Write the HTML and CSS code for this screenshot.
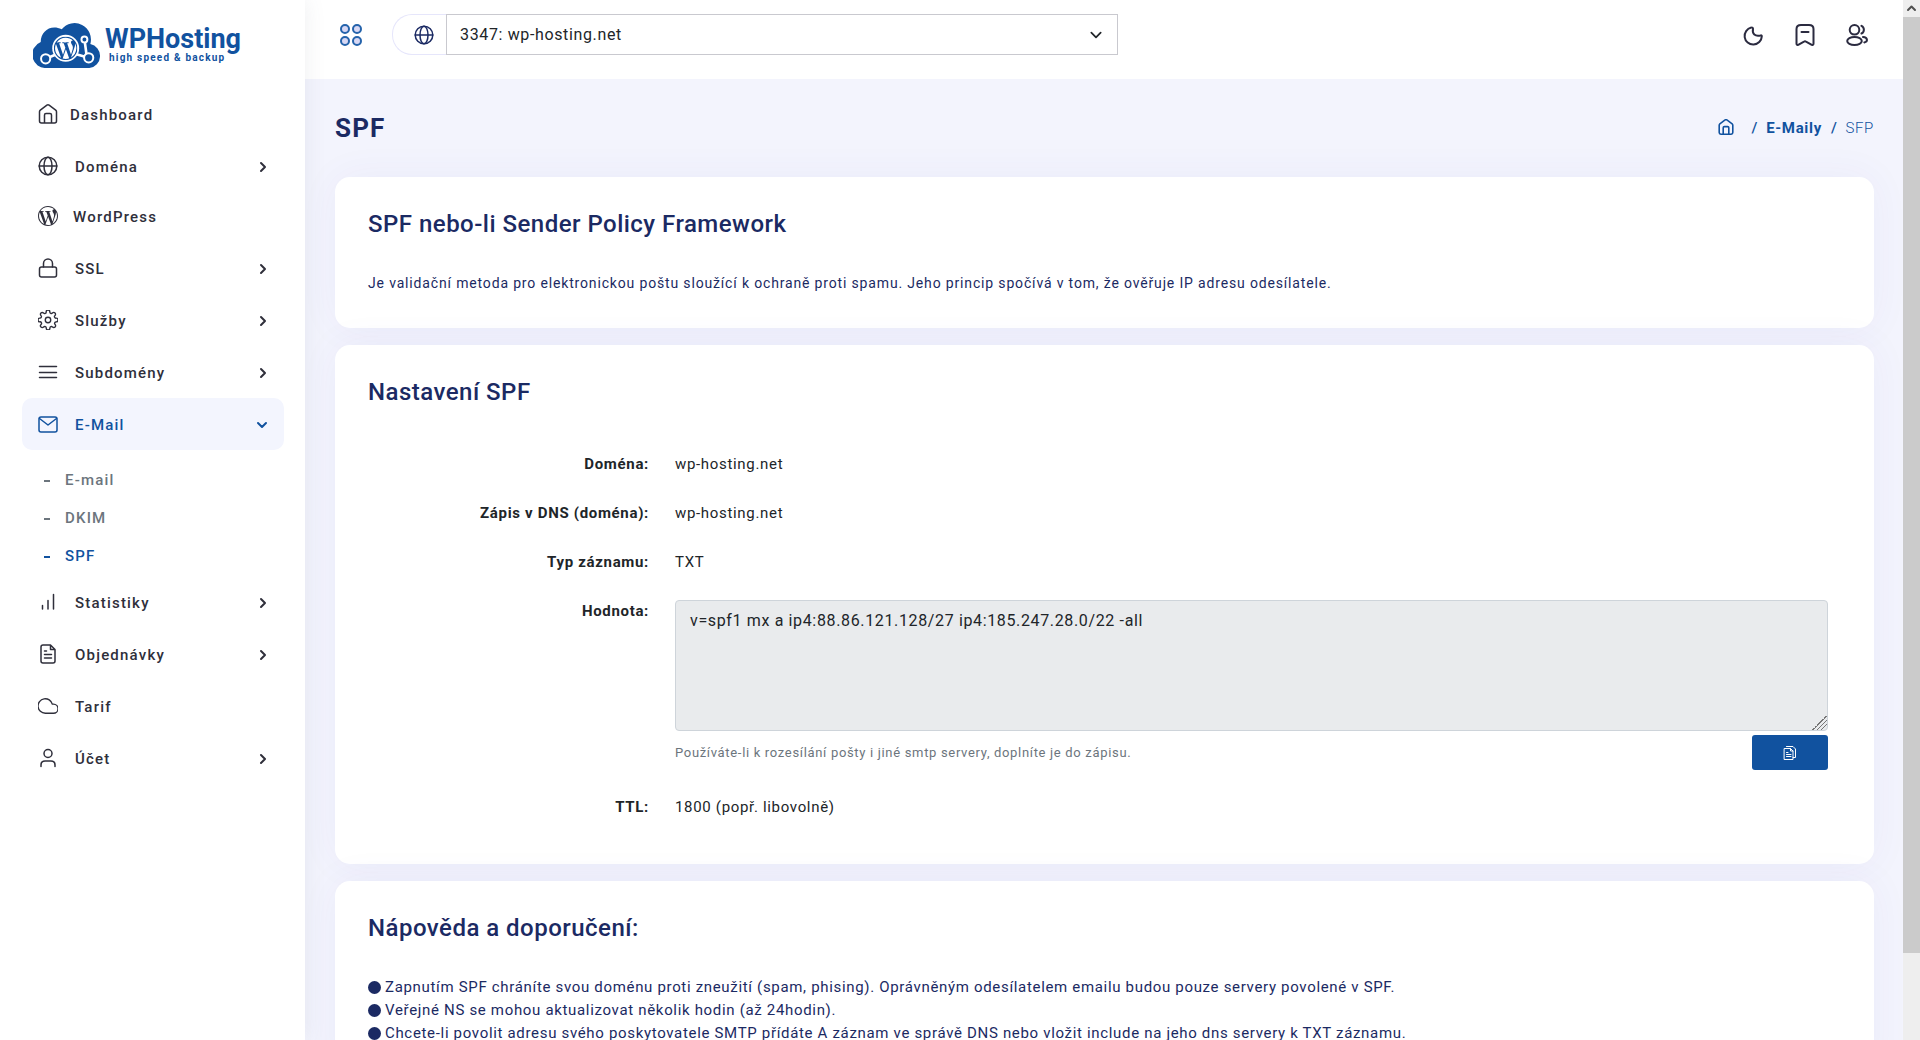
FILE: index.html
```html
<!DOCTYPE html>
<html lang="cs">
<head>
    <meta charset="utf-8">
    <title>SPF | WPHosting</title>
    <link rel="stylesheet" href="styles.css">
</head>
<body>
<svg class="sprite" aria-hidden="true">
    <symbol id="home" viewBox="0 0 20 20"><path d="M1.5 7.8 Q1.5 6.8 2.3 6.1 L8.9 1.2 Q10 .4 11.1 1.2 L17.7 6.1 Q18.5 6.8 18.5 7.8 V17 Q18.5 19 16.5 19 H3.5 Q1.5 19 1.5 17 Z M6.5 19 V11 Q6.5 9.5 8 9.5 H12 Q13.5 9.5 13.5 11 V19"/></symbol>
    <symbol id="globe" viewBox="0 0 20 20"><circle cx="10" cy="10" r="8.8"/><path d="M1.2 10 H18.8"/><ellipse cx="10" cy="10" rx="4" ry="8.8"/></symbol>
    <symbol id="wordpress" viewBox="0 0 24 24"><path d="M21.469 6.825c.84 1.537 1.318 3.3 1.318 5.175 0 3.979-2.156 7.456-5.363 9.325l3.295-9.527c.615-1.54.82-2.771.82-3.864 0-.405-.026-.78-.07-1.11m-7.981.105c.647-.03 1.232-.105 1.232-.105.582-.075.514-.93-.067-.899 0 0-1.755.135-2.88.135-1.064 0-2.85-.15-2.85-.15-.585-.03-.661.855-.075.885 0 0 .54.061 1.125.09l1.68 4.605-2.37 7.08L5.354 6.9c.649-.03 1.234-.1 1.234-.1.585-.075.516-.93-.065-.896 0 0-1.746.138-2.874.138-.2 0-.438-.008-.69-.015C4.911 3.15 8.235 1.215 12 1.215c2.809 0 5.365 1.072 7.286 2.833-.046-.003-.091-.009-.141-.009-1.06 0-1.812.923-1.812 1.914 0 .89.513 1.643 1.06 2.531.411.72.89 1.643.89 2.977 0 .915-.354 1.994-.821 3.479l-1.075 3.585-3.9-11.61.001.014zM12 22.784c-1.059 0-2.081-.153-3.048-.437l3.237-9.406 3.315 9.087c.024.053.05.101.078.149-1.12.393-2.325.609-3.582.609M1.211 12c0-1.564.336-3.05.935-4.39L7.29 21.709C3.694 19.96 1.212 16.271 1.211 12M12 0C5.385 0 0 5.385 0 12s5.385 12 12 12 12-5.385 12-12S18.615 0 12 0"/></symbol>
    <symbol id="lock" viewBox="0 0 20 20"><rect x="1.5" y="9" width="17" height="10" rx="2"/><path d="M5.5 9 V5.5 a4.5 4.5 0 0 1 9 0 V9"/></symbol>
    <symbol id="gear" viewBox="1 1 22 22"><circle cx="12" cy="12" r="3"/><path d="M19.4 15a1.65 1.65 0 0 0 .33 1.82l.06.06a2 2 0 1 1-2.83 2.83l-.06-.06a1.65 1.65 0 0 0-2.8 1.17V21a2 2 0 0 1-4 0v-.09A1.65 1.65 0 0 0 7.2 19.7l-.06.06a2 2 0 1 1-2.83-2.83l.06-.06A1.65 1.65 0 0 0 3.1 14H3a2 2 0 0 1 0-4h.09A1.65 1.65 0 0 0 4.3 7.2l-.06-.06a2 2 0 1 1 2.83-2.83l.06.06A1.65 1.65 0 0 0 10 3.1V3a2 2 0 0 1 4 0v.09a1.65 1.65 0 0 0 2.8 1.21l.06-.06a2 2 0 1 1 2.83 2.83l-.06.06A1.65 1.65 0 0 0 20.9 10H21a2 2 0 0 1 0 4h-.09a1.65 1.65 0 0 0-1.51 1z"/></symbol>
    <symbol id="lines" viewBox="0 0 20 20"><path d="M1.5 4.5 H18.5 M1.5 10.5 H18.5 M1.5 15.5 H18.5"/></symbol>
    <symbol id="mail" viewBox="0 0 20 20"><rect x="1" y="3" width="18" height="15" rx="2"/><path d="M1.5 4.5 L10 11 L18.5 4.5"/></symbol>
    <symbol id="bars" viewBox="0 0 20 20"><path d="M4.5 13.5 V17 M10 8.5 V17 M15.5 2.5 V17"/></symbol>
    <symbol id="file" viewBox="0 0 20 20"><path d="M12.5 1 H5 Q3 1 3 3 V17 Q3 19 5 19 H15 Q17 19 17 17 V5.5 Z V5.5 H17 M6.5 7 H8.5 M6.5 10.5 H13.5 M6.5 14 H13.5"/></symbol>
    <symbol id="cloud" viewBox="1 1 22 22"><path d="M18 10h-1.26A8 8 0 1 0 9 20h9a5 5 0 0 0 0-10z"/></symbol>
    <symbol id="user" viewBox="0 0 20 20"><circle cx="10" cy="5.5" r="4"/><path d="M3 18.5 V17 Q3 13 7 13 H13 Q17 13 17 17 V18.5"/></symbol>
    <symbol id="right" viewBox="0 0 10 12"><path d="M3 2 L7 6 L3 10"/></symbol>
    <symbol id="down" viewBox="0 0 12 10"><path d="M2 3 L6 7 L10 3"/></symbol>
</svg>

<aside class="sidebar">
    <a class="logo" href="#" aria-label="WPHosting">
        <svg class="logo-mark" viewBox="0 0 207 140">
            <path class="fill" d="M40 140 A41 41 0 0 1 22 61 C22 28 52 6 86 22 A50 50 0 0 1 173 67 A37 37 0 0 1 170 140 Z"/>
            <path class="wire" d="M37 112 L70 98 M168 109 L130 98 M155 53 L161 96"/>
            <circle class="white" cx="98" cy="80" r="41"/>
            <svg class="fill" x="62" y="44" width="72" height="72"><use href="#wordpress"/></svg>
            <circle class="node" cx="37" cy="112" r="14"/>
            <circle class="node" cx="168" cy="109" r="14"/>
            <circle class="node" cx="155" cy="53" r="9"/>
        </svg>
        <span class="logo-text">
            <span class="logo-name">WPHosting</span>
            <span class="logo-slogan">high speed &amp; backup</span>
        </span>
    </a>
    <nav class="menu">
        <a class="item dashboard" href="#"><svg class="icon"><use href="#home"/></svg><span>Dashboard</span></a>
        <a class="item" href="#"><svg class="icon"><use href="#globe"/></svg><span>Doména</span><svg class="arrow"><use href="#right"/></svg></a>
        <a class="item wordpress" href="#"><svg class="icon solid"><use href="#wordpress"/></svg><span>WordPress</span></a>
        <a class="item" href="#"><svg class="icon"><use href="#lock"/></svg><span>SSL</span><svg class="arrow"><use href="#right"/></svg></a>
        <a class="item" href="#"><svg class="icon"><use href="#gear"/></svg><span>Služby</span><svg class="arrow"><use href="#right"/></svg></a>
        <a class="item" href="#"><svg class="icon"><use href="#lines"/></svg><span>Subdomény</span><svg class="arrow"><use href="#right"/></svg></a>
        <a class="item active" href="#"><svg class="icon"><use href="#mail"/></svg><span>E-Mail</span><svg class="arrow"><use href="#down"/></svg></a>
        <div class="submenu">
            <a href="#">E-mail</a>
            <a href="#">DKIM</a>
            <a class="current" href="#">SPF</a>
        </div>
        <a class="item" href="#"><svg class="icon"><use href="#bars"/></svg><span>Statistiky</span><svg class="arrow"><use href="#right"/></svg></a>
        <a class="item" href="#"><svg class="icon"><use href="#file"/></svg><span>Objednávky</span><svg class="arrow"><use href="#right"/></svg></a>
        <a class="item" href="#"><svg class="icon"><use href="#cloud"/></svg><span>Tarif</span></a>
        <a class="item" href="#"><svg class="icon"><use href="#user"/></svg><span>Účet</span><svg class="arrow"><use href="#right"/></svg></a>
    </nav>
</aside>

<div class="page">
    <header class="header">
        <button class="toggle" aria-label="Menu">
            <svg viewBox="0 0 22 22"><circle cx="5" cy="5" r="4"/><circle cx="17" cy="5" r="4"/><circle cx="5" cy="17" r="4"/><circle cx="17" cy="17" r="4"/></svg>
        </button>
        <div class="domain">
            <label class="domain-label" for="domain" aria-label="Doména"><svg class="icon"><use href="#globe"/></svg></label>
            <div class="select">
                <select id="domain"><option>3347: wp-hosting.net</option></select>
                <svg><use href="#down"/></svg>
            </div>
        </div>
        <div class="tools">
            <button aria-label="Tmavý režim"><svg viewBox="0 0 22 22"><path d="M9.3 3.6 A8.6 8.6 0 1 0 19.8 12.4 Q20 11 18.5 11.4 C13 12.6 10 10 11 4.8 Q11 3.2 9.3 3.6 Z"/></svg></button>
            <button aria-label="Záložky"><svg viewBox="0 0 22 22"><path d="M2.5 5 Q2.5 1 7 1 H15 Q19.5 1 19.5 5 V19.5 Q19.5 21.5 17.8 20.8 L12 17.6 Q11 17 10 17.6 L4.2 20.8 Q2.5 21.5 2.5 19.5 Z M7.5 8 H14.5"/></svg></button>
            <button aria-label="Účet"><svg viewBox="0 0 22 22"><circle cx="8.5" cy="5.8" r="4.8"/><ellipse cx="8.5" cy="17" rx="7.3" ry="4"/><path d="M15.5 1.8 A4.3 4.3 0 0 1 15.5 9.5 M17 13 C22 13.4 22 17.6 18.3 18.4"/></svg></button>
        </div>
    </header>

    <main class="content">
        <div class="title-row">
            <h1>SPF</h1>
            <nav class="breadcrumb">
                <a href="#" aria-label="Dashboard"><svg class="icon"><use href="#home"/></svg></a>
                <span class="slash">/</span>
                <a href="#">E-Maily</a>
                <span class="slash">/</span>
                <span class="here">SFP</span>
            </nav>
        </div>

        <section class="card">
            <h2>SPF nebo-li Sender Policy Framework</h2>
            <p class="intro">Je validační metoda pro elektronickou poštu sloužící k ochraně proti spamu. Jeho princip spočívá v tom, že ověřuje IP adresu odesílatele.</p>
        </section>

        <section class="card">
            <h2>Nastavení SPF</h2>
            <div class="form">
                <b>Doména:</b><span>wp-hosting.net</span>
                <b>Zápis v DNS (doména):</b><span>wp-hosting.net</span>
                <b>Typ záznamu:</b><span>TXT</span>
                <label for="spf">Hodnota:</label>
                <div class="value">
                    <textarea id="spf" readonly>v=spf1 mx a ip4:88.86.121.128/27 ip4:185.247.28.0/22 -all</textarea>
                    <div class="under">
                        <small>Používáte-li k rozesílání pošty i jiné smtp servery, doplníte je do zápisu.</small>
                        <button class="copy" aria-label="Kopírovat"><svg viewBox="0 0 14 14"><path d="M1.5 2.5 H7.5 L10 5 V13.5 H1.5 Z M7.5 2.5 V5 H10 M3.5 .5 H10 L12.5 3 V11.5 H10 M3.5 6.5 H5 M3.5 8.5 H8 M3.5 10.5 H8"/></svg></button>
                    </div>
                </div>
                <b>TTL:</b><span>1800 (popř. libovolně)</span>
            </div>
        </section>

        <section class="card">
            <h2>Nápověda a doporučení:</h2>
            <ul class="help">
                <li>Zapnutím SPF chráníte svou doménu proti zneužití (spam, phising). Oprávněným odesílatelem emailu budou pouze servery povolené v SPF.</li>
                <li>Veřejné NS se mohou aktualizovat několik hodin (až 24hodin).</li>
                <li>Chcete-li povolit adresu svého poskytovatele SMTP přídáte A záznam ve správě DNS nebo vložit include na jeho dns servery k TXT záznamu.</li>
            </ul>
        </section>
    </main>
</div>

<div class="scrollbar" aria-hidden="true">
    <svg viewBox="0 0 17 17"><path d="M5 10 L8.5 6.5 L12 10"/></svg>
    <div class="thumb"></div>
</div>
</body>
</html>
```
FILE: styles.css
```css
* {
    box-sizing: border-box;
}

body {
    margin: 0;
    display: flex;
    height: 100vh;
    overflow: hidden;
    background: #f3f4fd;
    color: #212529;
    font: 15px/23px Roboto, "Noto Sans", sans-serif;
    letter-spacing: .045em;
}

a {
    color: inherit;
    text-decoration: none;
}

button {
    padding: 0;
    border: none;
    background: none;
    cursor: pointer;
}

svg {
    display: block;
    fill: none;
    stroke: currentColor;
    stroke-width: 1.5;
    stroke-linecap: round;
    stroke-linejoin: round;
}

.sprite {
    position: absolute;
    width: 0;
    height: 0;
}

.icon {
    width: 20px;
    height: 20px;
    overflow: visible;
}

.solid {
    fill: currentColor;
    stroke: none;
}

/* sidebar */
.sidebar {
    flex: 0 0 305px;
    background: #fff;
    box-shadow: 0 0 20px rgba(89, 102, 122, .1);
    z-index: 1;
}

.logo {
    display: flex;
    align-items: flex-start;
    gap: 3px;
    height: 88px;
    padding: 22px 0 0 33px;
    color: #11529f;
}

.logo-mark {
    width: 69px;
    height: 46px;
    stroke: none;
}

.logo-mark .fill {
    fill: #11529f;
    stroke: none;
}

.logo-mark .white {
    fill: #fff;
}

.logo-mark .wire {
    stroke: #fff;
    stroke-width: 8;
}

.logo-mark .node {
    fill: #11529f;
    stroke: #fff;
    stroke-width: 6;
}

.logo-text {
    display: flex;
    flex-direction: column;
    padding-top: 4px;
}

.logo-name {
    font-size: 27px;
    font-weight: 700;
    line-height: 27px;
    letter-spacing: 0;
}

.logo-slogan {
    padding-left: 4px;
    font-size: 10px;
    font-weight: 700;
    line-height: 10px;
    letter-spacing: .12em;
}

.menu {
    padding: 0 21px 0 22px;
}

.item {
    display: flex;
    align-items: center;
    height: 52px;
    padding: 0 16px;
    border-radius: 10px;
    color: #2f2f3b;
    font-weight: 500;
    letter-spacing: .08em;
}

.item > span {
    flex-grow: 1;
    padding: 3px 0 0 17px;
}

.dashboard > span {
    padding-left: 12px;
}

.wordpress > span {
    padding-left: 15px;
}

.wordpress {
    height: 48px;
    margin-bottom: 2px;
}

.item .icon {
    margin-bottom: 1px;
}

.arrow {
    width: 10px;
    height: 12px;
    margin-top: 2px;
    stroke-width: 2;
}

.active {
    background: #f3f5fe;
    color: #11529f;
}

.active .arrow {
    width: 12px;
}

.submenu {
    display: flex;
    flex-direction: column;
    padding: 11px 0 1px 22px;
}

.submenu a {
    color: #6c757d;
    font-weight: 500;
    line-height: 38px;
    letter-spacing: .08em;
}

.submenu a::before {
    content: "";
    display: inline-block;
    width: 6px;
    height: 2px;
    margin-right: 15px;
    background: currentColor;
    vertical-align: middle;
}

.submenu .current {
    color: #11529f;
}

/* top bar */
.page {
    flex: 1;
    min-width: 0;
}

.header {
    display: flex;
    align-items: center;
    height: 79px;
    padding: 0 35px 10px 35px;
    background: #fff;
}

.toggle {
    margin-right: 30px;
    color: #2563ab;
}

.toggle svg {
    width: 22px;
    height: 22px;
    fill: #d8d8f4;
    stroke-width: 2;
}

.domain {
    display: flex;
    width: 47.5%;
    height: 41px;
}

.domain-label {
    display: flex;
    align-items: center;
    justify-content: flex-end;
    width: 54px;
    padding-right: 12px;
    border: 1px solid #e6e6fb;
    border-right: none;
    border-radius: 20px 0 0 20px;
    color: #1b2a63;
}

.select {
    flex: 1;
    display: grid;
    align-items: center;
}

.select > * {
    grid-area: 1 / 1;
}

.select select {
    width: 100%;
    height: 41px;
    padding: 0 13px;
    border: 1px solid #c9c9cf;
    appearance: none;
    background: #fff;
    color: #212529;
    font: inherit;
    font-size: 16px;
    letter-spacing: .04em;
}

.select svg {
    justify-self: end;
    width: 14px;
    height: 12px;
    margin-right: 15px;
    pointer-events: none;
}

.tools {
    display: flex;
    gap: 30px;
    margin-left: auto;
}

.tools button {
    color: #2b2b40;
}

.tools svg {
    width: 22px;
    height: 22px;
    stroke-width: 2;
}

/* content */
.content {
    padding: 0 29px 0 30px;
}

.title-row {
    display: flex;
    align-items: center;
    justify-content: space-between;
    height: 98px;
}

h1 {
    margin: 0;
    color: #1b2a63;
    font-size: 26px;
    font-weight: 700;
    letter-spacing: .045em;
}

.breadcrumb {
    display: flex;
    align-items: center;
    color: #11529f;
    font-weight: 700;
}

.breadcrumb .icon {
    width: 16px;
    height: 16px;
    margin: 0 9px 2px 0;
    stroke-width: 2;
}

.slash {
    margin: 0 8px 0 9px;
    font-weight: 500;
}

.here {
    font-weight: 300;
}

.card {
    margin-bottom: 17px;
    padding: 33px;
    border-radius: 15px;
    background: #fff;
    box-shadow: 0 0 40px rgba(80, 60, 170, .05);
    color: #1b2a63;
}

h2 {
    margin: 0 0 33px;
    font-size: 24px;
    font-weight: 500;
    line-height: 29px;
    letter-spacing: .02em;
}

.intro {
    margin: 0;
    font-size: 14px;
    letter-spacing: .06em;
}

.form {
    display: grid;
    grid-template-columns: 281px 1fr;
    gap: 26px;
    padding: 13px 13px 12px 0;
    color: #212529;
}

.form > b,
.form > label {
    font-weight: 700;
    text-align: right;
}

.value {
    display: flex;
    flex-direction: column;
    gap: 4px;
}

textarea {
    display: block;
    width: 100%;
    height: 131px;
    padding: 8px 14px;
    border: 1px solid #ced4da;
    border-radius: 4px;
    background: #e9ebed;
    color: #212529;
    font: 16px/24px Roboto, "Noto Sans", sans-serif;
    letter-spacing: .04em;
    resize: both;
}

textarea::-webkit-resizer {
    background: linear-gradient(135deg, transparent 50%, #777 50% 55%, transparent 55% 64%, #777 64% 69%, transparent 69% 78%, #777 78% 83%, transparent 83%);
}

.under {
    display: flex;
    justify-content: space-between;
    align-items: center;
}

small {
    color: #6c757d;
    font-size: 13px;
}

.copy {
    display: flex;
    align-items: center;
    justify-content: center;
    width: 76px;
    height: 35px;
    border-radius: 3px;
    background: #11529f;
    color: #fff;
}

.copy svg {
    width: 14px;
    height: 14px;
    stroke-width: 1;
}

.help {
    margin: 0;
    padding: 0;
    list-style: none;
}

.help li {
    display: flex;
    align-items: center;
    gap: 4px;
}

.help li::before {
    content: "";
    flex: 0 0 13px;
    height: 13px;
    border-radius: 50%;
    background: #1b2a63;
}

/* page scrollbar */
.scrollbar {
    flex: 0 0 17px;
    background: #eee;
    color: #505050;
}

.scrollbar svg {
    width: 17px;
    height: 17px;
    stroke-width: 2;
}

.thumb {
    height: 90%;
    background: #cbcbcb;
}
```
